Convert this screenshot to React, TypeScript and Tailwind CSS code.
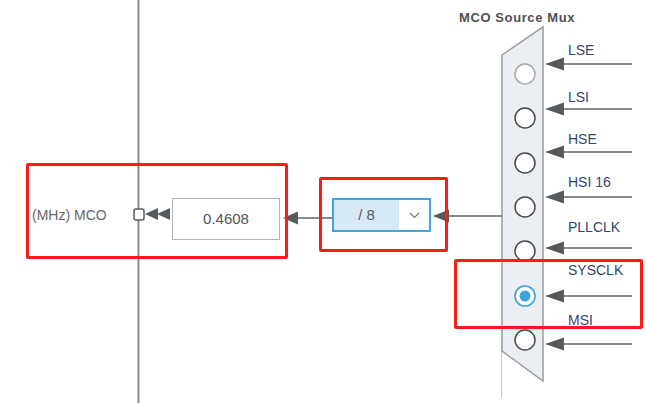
import React from "react";

/**
 * MCO 출력 경로 — 소스 먹스 → 분주기 → MCO 핀.
 */

const sources = [
  { name: "LSE", label: 50, arrow: 64, circle: 74, disabled: true },
  { name: "LSI", label: 97, arrow: 109, circle: 118 },
  { name: "HSE", label: 139, arrow: 152, circle: 163 },
  { name: "HSI 16", label: 182, arrow: 197, circle: 207 },
  { name: "PLLCLK", label: 227, arrow: 248, circle: 251 },
  { name: "SYSCLK", label: 270, arrow: 296, circle: 296, selected: true },
  { name: "MSI", label: 320, arrow: 344, circle: 340 },
];

function LeftArrow({ x, y, w = 18, h = 13 }: { x: number; y: number; w?: number; h?: number }) {
  return <polygon points={`${x},${y} ${x + w},${y - h / 2} ${x + w},${y + h / 2}`} fill="#555a5f" />;
}

export default function App() {
  return (
    <div
      className="relative w-[646px] h-[403px] bg-white overflow-hidden"
      style={{ fontFamily: '"Liberation Sans", Arial, sans-serif' }}
    >
      <svg className="absolute inset-0" width={646} height={403}>
        {/* 세로 버스 */}
        <line x1={138.5} y1={0} x2={138.5} y2={403} stroke="#8a8a8a" strokeWidth={2} />

        {/* 먹스 */}
        <line x1={501.5} y1={340} x2={501.5} y2={398} stroke="#c8c8c8" strokeWidth={1} />
        <polygon points="502,55 543,27 543,381 502,351" fill="#ebeef2" stroke="#9a9a9a" strokeWidth={1.5} />

        {sources.map((s) => (
          <g key={s.name}>
            <line x1={560} y1={s.arrow} x2={632} y2={s.arrow} stroke="#8a8a8a" strokeWidth={2} />
            <LeftArrow x={545} y={s.arrow} w={19} h={13} />
            {s.selected ? (
              <>
                <circle cx={525} cy={s.circle} r={10} fill="#fff" stroke="#3ba3de" strokeWidth={1.6} />
                <circle cx={525} cy={s.circle} r={5.5} fill="#3ba3de" />
              </>
            ) : (
              <circle
                cx={525}
                cy={s.circle}
                r={10}
                fill="#fff"
                stroke={s.disabled ? "#a8a8a8" : "#4a4a4a"}
                strokeWidth={1.5}
              />
            )}
          </g>
        ))}

        {/* 먹스 → 분주기 */}
        <line x1={445} y1={216} x2={502} y2={216} stroke="#8a8a8a" strokeWidth={2} />
        <LeftArrow x={433} y={216} w={16} h={13} />

        {/* 분주기 → 값 */}
        <line x1={295} y1={218} x2={332} y2={218} stroke="#8a8a8a" strokeWidth={2} />
        <LeftArrow x={283} y={218} w={15} h={13} />

        {/* 값 → MCO */}
        <LeftArrow x={157} y={214} w={13} h={12} />
        <LeftArrow x={145} y={214} w={13} h={12} />
        <rect x={134} y={209} width={10} height={11} rx={2} fill="#fff" stroke="#555a5f" strokeWidth={1.5} />
      </svg>

      <div className="absolute left-[459px] top-[8px] text-[13px] font-bold text-[#505050] tracking-[0.6px]">
        MCO Source Mux
      </div>

      {sources.map((s) => (
        <div
          key={s.name}
          className="absolute left-[568px] text-[14px] leading-none text-[#34466b]"
          style={{ top: s.label - 7 }}
        >
          {s.name}
        </div>
      ))}

      <div className="absolute left-[32px] top-[205px] text-[14px] text-[#666]">(MHz) MCO</div>

      <div className="absolute left-[172px] top-[198px] w-[108px] h-[42px] border border-[#b4b4b4] bg-white flex items-center justify-center text-[15px] text-[#555]">
        0.4608
      </div>

      <div className="absolute left-[332px] top-[198px] w-[99px] h-[34px] border-2 border-[#3fa6e2] flex">
        <div className="w-[65px] bg-[#d8e9f6] flex items-center justify-center text-[15px] text-[#555]">/ 8</div>
        <div className="flex-1 bg-white flex items-center justify-center">
          <svg width={11} height={7} viewBox="0 0 11 7">
            <path d="M1 1 L5.5 5.5 L10 1" fill="none" stroke="#777" strokeWidth={1.2} />
          </svg>
        </div>
      </div>

      {/* 강조 박스 */}
      <div className="absolute left-[26px] top-[163px] w-[262px] h-[96px] border-[3px] border-[#ff1a1a] rounded-[2px]" />
      <div className="absolute left-[319px] top-[177px] w-[129px] h-[75px] border-[3px] border-[#ff1a1a] rounded-[2px]" />
      <div className="absolute left-[454px] top-[259px] w-[189px] h-[70px] border-[3px] border-[#ff1a1a] rounded-[2px]" />
    </div>
  );
}
